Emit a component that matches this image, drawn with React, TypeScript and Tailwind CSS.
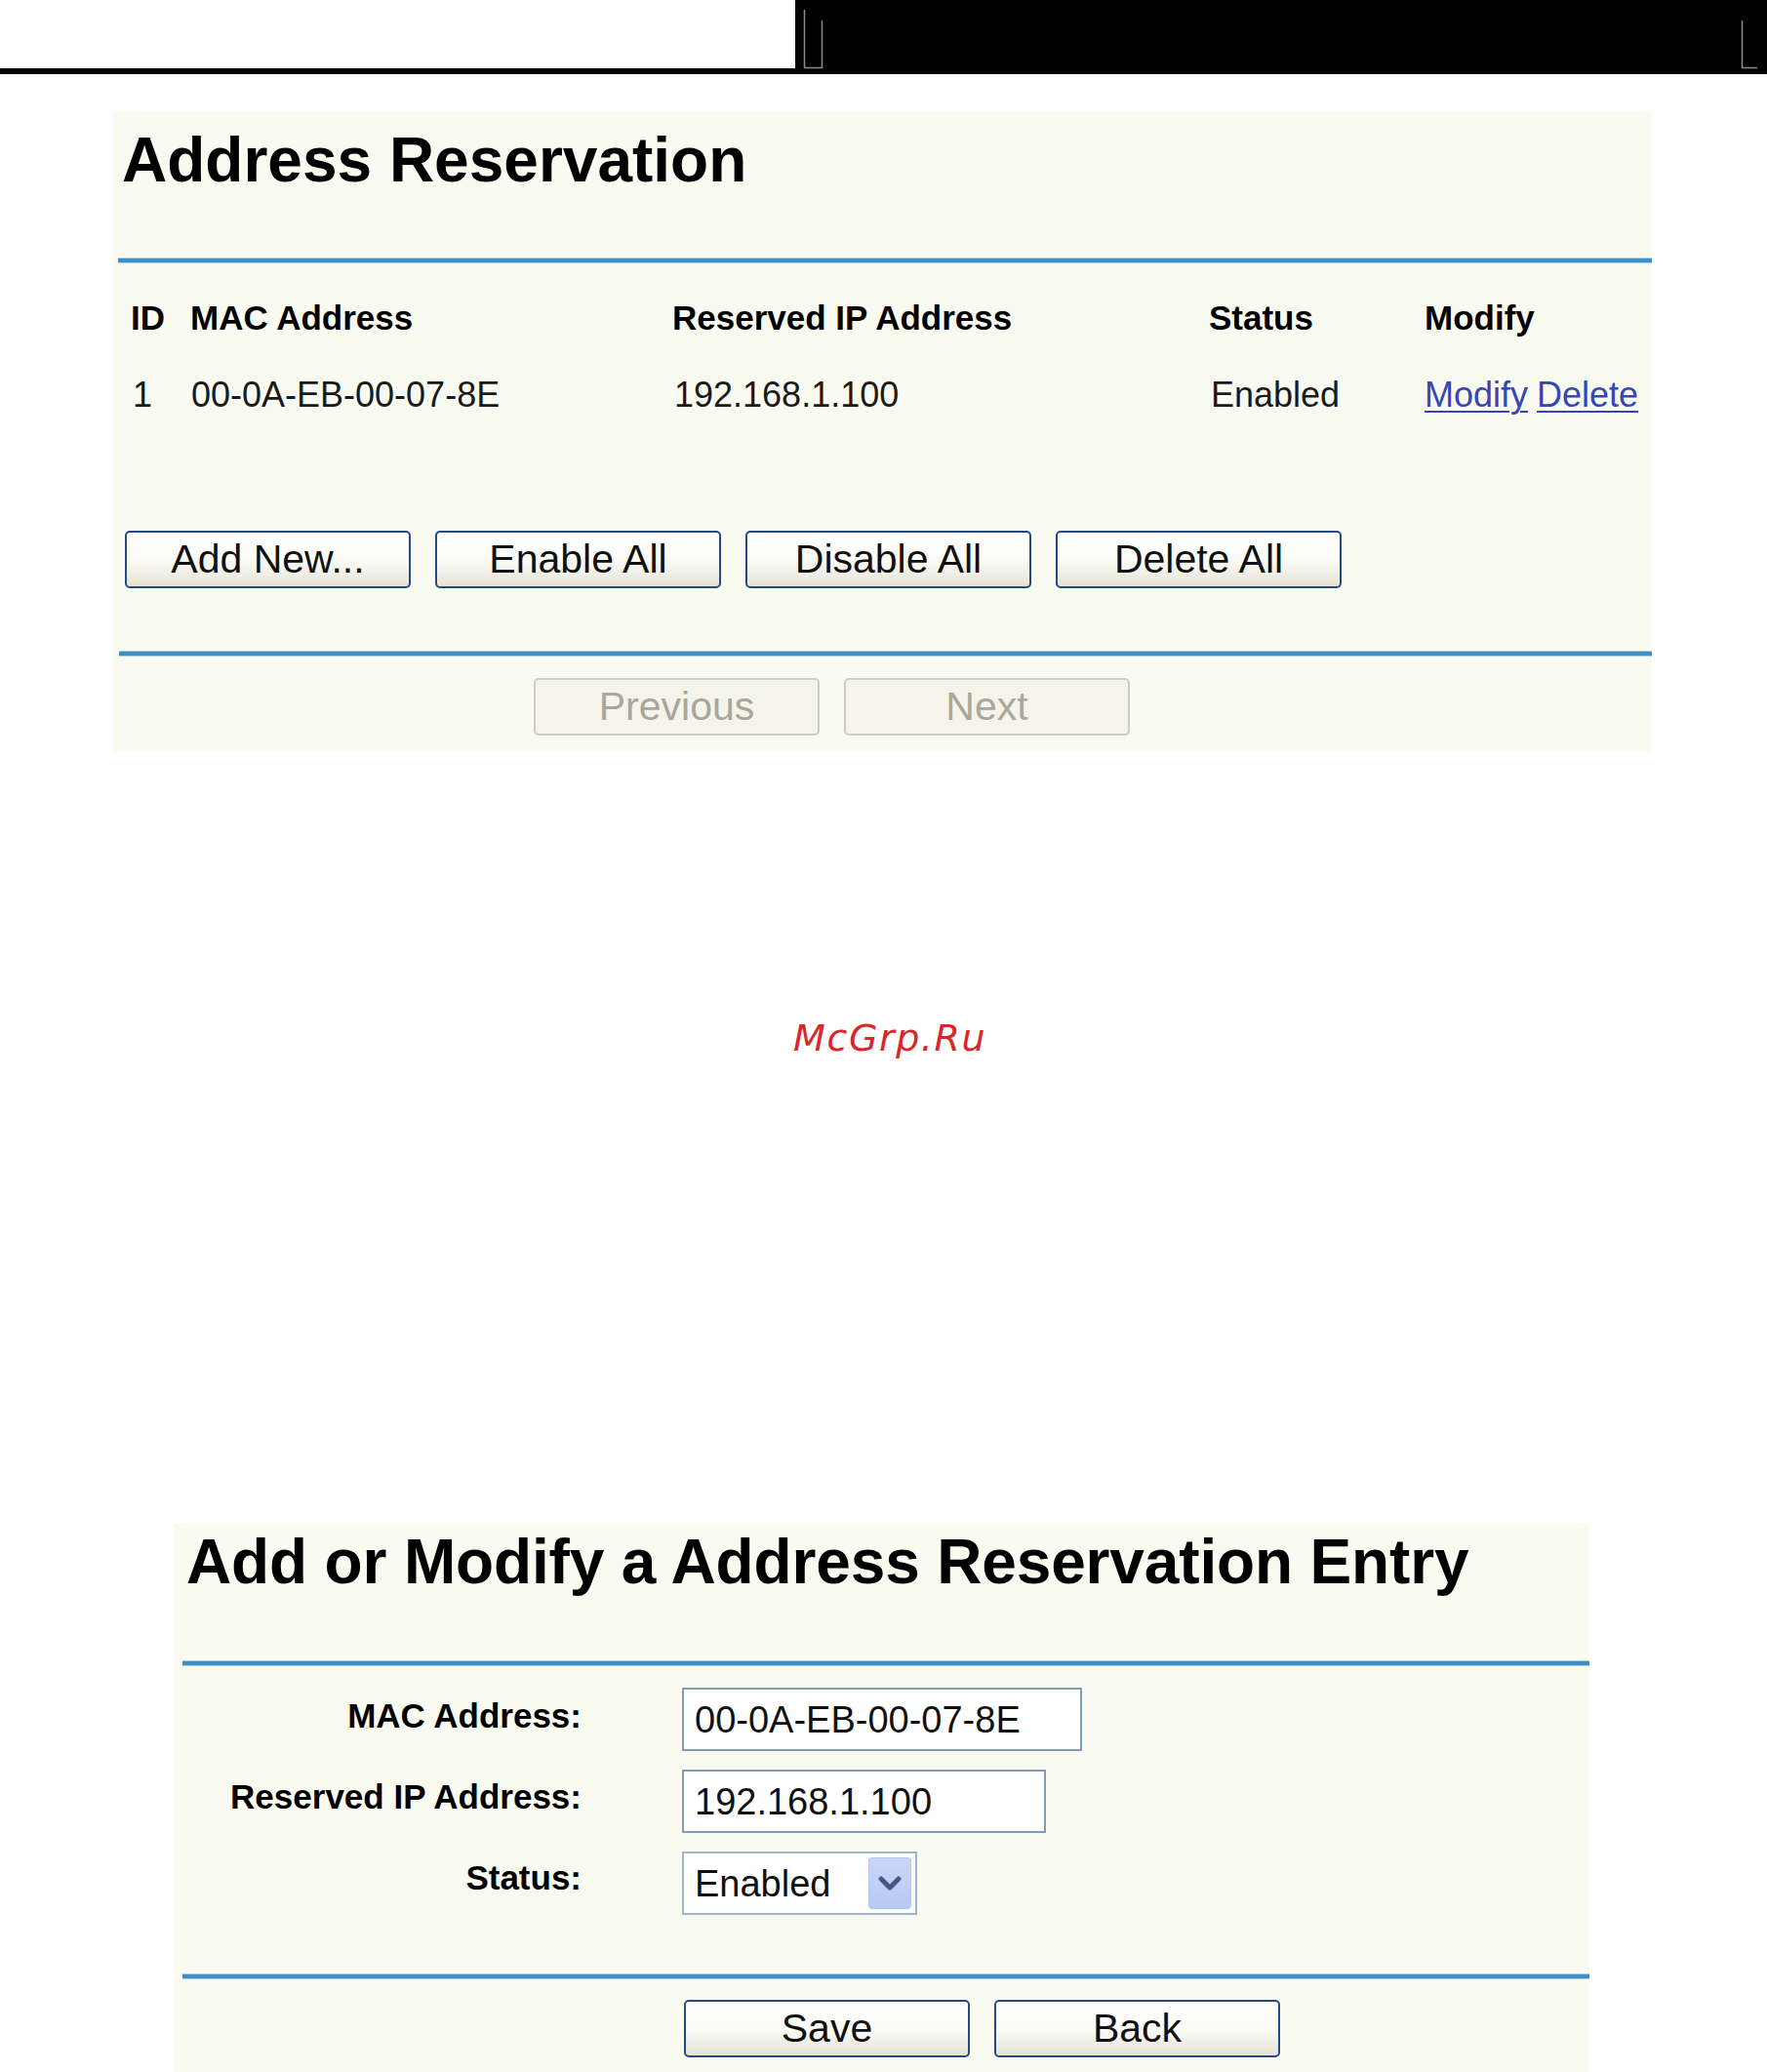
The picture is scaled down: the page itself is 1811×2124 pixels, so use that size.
import React from 'react';

const sans = "font-['Liberation_Sans',Arial,sans-serif]";

function XpButton({ label, disabled }: { label: string; disabled?: boolean }) {
  return (
    <button
      type="button"
      className={
        disabled
          ? 'w-[293px] h-[59px] rounded-[5px] border-2 border-[#cfcdbf] bg-[#f5f4ea] text-[41px] leading-none text-[#a8a799]'
          : 'w-[293px] h-[59px] rounded-[5px] border-2 border-[#234a86] bg-linear-to-b from-white via-[#fbfbf8] to-[#e6e3d5] text-[41px] leading-none text-[#111]'
      }
    >
      {label}
    </button>
  );
}

function BlueRule({ className }: { className: string }) {
  return (
    <div className={'h-[6px] border-y border-[#a9cfe6] bg-[#3f8fc6] ' + className} />
  );
}

export default function App() {
  return (
    <div className={'w-[1811px] bg-white text-black ' + sans}>
      {/* top strip */}
      <div className="flex h-[76px]">
        <div className="w-[815px] h-[76px] bg-white border-b-[6px] border-black" />
        <div className="flex-1 h-[76px] bg-black">
          <svg width="996" height="76" className="block">
            <path d="M9.5 10 V69.5 H27.5 V21" fill="none" stroke="#8a8a8a" strokeWidth="1.5" />
            <path d="M970.5 21 V69.5 H986" fill="none" stroke="#8a8a8a" strokeWidth="1.5" />
          </svg>
        </div>
      </div>

      {/* Address Reservation panel */}
      <div className="mt-[39px] ml-[115px] w-[1578px] bg-[#fafbf0] pb-[17px]">
        <h1 className="pt-[17px] pl-[10px] text-[64px] leading-[64px] font-bold">
          Address Reservation
        </h1>
        <BlueRule className="mt-[68px] ml-[6px]" />

        <div className="mt-[38px] pl-[19px] grid grid-cols-[61px_494px_550px_221px_1fr]">
          <div className="text-[35px] leading-[35px] font-bold">ID</div>
          <div className="text-[35px] leading-[35px] font-bold">MAC Address</div>
          <div className="text-[35px] leading-[35px] font-bold">Reserved IP Address</div>
          <div className="text-[35px] leading-[35px] font-bold">Status</div>
          <div className="text-[35px] leading-[35px] font-bold">Modify</div>

          <div className="mt-[44px] pl-[2px] text-[36px] leading-[36px] text-[#1a1a1a]">1</div>
          <div className="mt-[44px] pl-[1px] text-[36px] leading-[36px] text-[#1a1a1a]">00-0A-EB-00-07-8E</div>
          <div className="mt-[44px] pl-[2px] text-[36px] leading-[36px] text-[#1a1a1a]">192.168.1.100</div>
          <div className="mt-[44px] pl-[2px] text-[36px] leading-[36px] text-[#1a1a1a]">Enabled</div>
          <div className="mt-[44px] flex gap-[9px] text-[36px] leading-[36px] text-[#3646b4]">
            <a className="underline underline-offset-4 decoration-2">Modify</a>
            <a className="underline underline-offset-4 decoration-2">Delete</a>
          </div>
        </div>

        <div className="mt-[121px] pl-[13px] flex gap-[25px]">
          <XpButton label="Add New..." />
          <XpButton label="Enable All" />
          <XpButton label="Disable All" />
          <XpButton label="Delete All" />
        </div>

        <BlueRule className="mt-[64px] ml-[7px]" />

        <div className="mt-[22px] pl-[432px] flex gap-[25px]">
          <XpButton label="Previous" disabled />
          <XpButton label="Next" disabled />
        </div>
      </div>

      {/* watermark */}
      <div className="mt-[274px] pl-[813px] font-['DejaVu_Sans',sans-serif] italic text-[38px] leading-[38px] tracking-[1.6px] text-[#d8262b]">
        McGrp.Ru
      </div>

      {/* Add or Modify panel */}
      <div className="mt-[479px] ml-[178px] w-[1451px] bg-[#fafbf0] pb-[17px]">
        <h2 className="pt-[7px] pl-[13px] text-[64px] leading-[64px] font-bold tracking-[-0.15px]">
          Add or Modify a Address Reservation Entry
        </h2>
        <BlueRule className="mt-[69px] ml-[9px]" />

        <div className="mt-[22px] grid grid-cols-[418px_1fr] gap-x-[103px] gap-y-[19px] items-center">
          <div className="text-right text-[35px] leading-[35px] font-bold pb-[9px]">MAC Address:</div>
          <div className="w-[410px] h-[65px] border-2 border-[#7f9db9] bg-white pl-[11px] flex items-center text-[38px] leading-none text-[#111]">
            00-0A-EB-00-07-8E
          </div>

          <div className="text-right text-[35px] leading-[35px] font-bold pb-[10px]">Reserved IP Address:</div>
          <div className="w-[373px] h-[65px] border-2 border-[#7f9db9] bg-white pl-[11px] flex items-center text-[38px] leading-none text-[#111]">
            192.168.1.100
          </div>

          <div className="text-right text-[35px] leading-[35px] font-bold pb-[12px]">Status:</div>
          <div className="w-[241px] h-[65px] border-2 border-[#9fb5d2] bg-white pl-[11px] pr-[4px] flex items-center justify-between text-[38px] leading-none text-[#111]">
            <span>Enabled</span>
            <span className="w-[44px] h-[53px] rounded-[3px] border border-[#b9c9ee] bg-linear-to-b from-[#c9d6f8] to-[#b8c9f2] flex items-center justify-center">
              <svg width="26" height="18" viewBox="0 0 26 18">
                <path d="M4 4 L13 13 L22 4" fill="none" stroke="#46588a" strokeWidth="5" strokeLinecap="round" strokeLinejoin="round" />
              </svg>
            </span>
          </div>
        </div>

        <BlueRule className="mt-[60px] ml-[9px]" />

        <div className="mt-[21px] pl-[523px] flex gap-[25px]">
          <XpButton label="Save" />
          <XpButton label="Back" />
        </div>
      </div>
    </div>
  );
}
